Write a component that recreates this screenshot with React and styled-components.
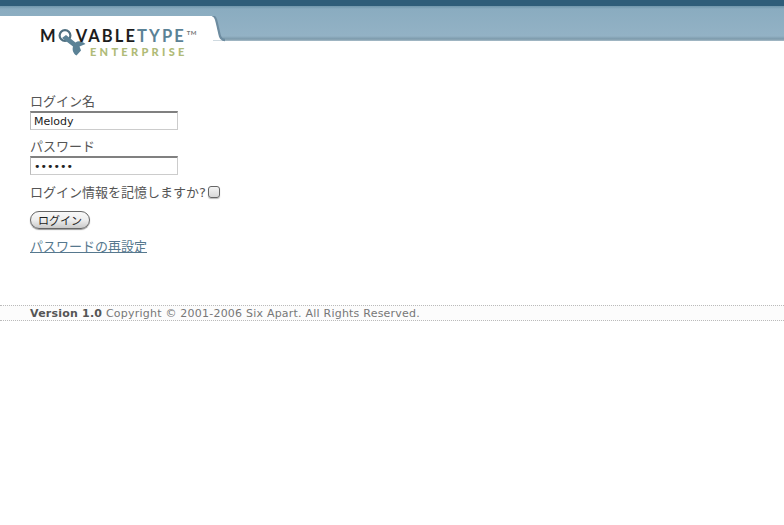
import styled, { createGlobalStyle } from "styled-components";

const GlobalStyle = createGlobalStyle`
  html, body {
    margin: 0;
    padding: 0;
    background: #fff;
  }
  body {
    font-family: "DejaVu Sans", "Noto Sans CJK JP", sans-serif;
    color: #444;
  }
`;

const Masthead = styled.div`
  height: 94px;
  background:
    linear-gradient(#2e5d79 0, #2e5d79 6px, #6f96ab 6px, #8aacc0 9px, #93b2c5 36px, #7d9aab 39px, #a9bdc9 41px) no-repeat;
  background-size: 100% 41px;
  display: flex;
  flex-direction: column;
`;

const LogoTab = styled.div`
  position: relative;
  box-sizing: border-box;
  width: 213px;
  height: 78px;
  margin-top: 16px;
  padding: 12px 0 0 40px;
  background: #fff;
`;

const TabCurve = styled.svg`
  position: absolute;
  left: 210px;
  top: 0;
`;

const LogoTop = styled.div`
  display: flex;
  align-items: flex-start;
  height: 18px;
  font-family: Lato, "Open Sans", sans-serif;
  font-weight: 700;
  font-size: 16.5px;
  line-height: 17px;
  letter-spacing: 2.1px;
  color: #1d1d1d;
  white-space: nowrap;
`;

const LogoBlue = styled.span`
  color: #5b8296;
`;

const LogoTm = styled.span`
  margin-left: 1px;
  font-size: 6px;
  line-height: 9px;
  letter-spacing: 0.3px;
  color: #777;
`;

const Wrench = styled.svg`
  flex: none;
  width: 30px;
  height: 30px;
  margin-top: -1px;
  margin-right: -12px;
`;

const LogoBottom = styled.div`
  margin: 0 0 0 50px;
  font-family: Lato, "Open Sans", sans-serif;
  font-weight: 900;
  font-size: 11px;
  line-height: 12px;
  letter-spacing: 3.3px;
  color: #b0bb78;
`;

const Form = styled.form`
  display: flex;
  flex-direction: column;
  align-items: flex-start;
  padding-left: 30px;
`;

const Label = styled.label`
  padding-bottom: 2px;
  font-size: 13px;
  line-height: 15px;
  color: #555;
`;

const TextInput = styled.input`
  box-sizing: border-box;
  display: block;
  width: 148px;
  height: 19px;
  margin: 0 0 9px;
  padding: 0 3px;
  border: 1px solid #ccc;
  border-top: 2px solid #808080;
  border-left-color: #bbb;
  outline: none;
  font-family: "DejaVu Sans", sans-serif;
  font-size: 11px;
  color: #222;
  background: #fff;
`;

const RememberRow = styled.div`
  display: flex;
  align-items: center;
  gap: 2px;
  height: 18px;
  margin-top: -2px;
  font-size: 13px;
  color: #555;
`;

const CheckBox = styled.span`
  box-sizing: border-box;
  display: block;
  width: 12px;
  height: 12px;
  margin-top: 2px;
  border: 1px solid #666;
  border-radius: 3px;
  background: linear-gradient(#f4f4f4, #d8d8d8);
  box-shadow: 0 1px 1px #bbb;
`;

const LoginButton = styled.button`
  box-sizing: border-box;
  width: 60px;
  height: 18px;
  margin-top: 11px;
  padding: 0;
  border: 1px solid #666;
  border-radius: 9px;
  background: linear-gradient(#f8f8f8, #eee 50%, #c9c9c9);
  box-shadow: 0 1px 1px #999;
  font-family: "Noto Sans CJK JP", sans-serif;
  font-size: 11px;
  line-height: 15px;
  color: #222;
`;

const ResetLink = styled.a`
  margin-top: 9px;
  font-size: 13px;
  line-height: 17px;
  color: #56788e;
  text-decoration: underline;
`;

const Footer = styled.div`
  box-sizing: border-box;
  height: 16px;
  margin-top: 50px;
  padding-left: 30px;
  border-top: 1px dotted #bbb;
  border-bottom: 1px dotted #bbb;
  background: #fcfcfc;
  font-size: 11px;
  line-height: 15px;
  letter-spacing: 0.22px;
  color: #777;
  white-space: nowrap;
`;

const Version = styled.strong`
  color: #555;
`;

export default function App() {
  return (
    <>
      <GlobalStyle />
      <Masthead>
        <LogoTab>
          <TabCurve width="18" height="26" viewBox="0 0 18 26">
            <path d="M1 0 C5 1 5 4 6 8 L8.5 19 C9.5 23 11 24 14 24" fill="none" stroke="#6d8ca0" strokeWidth="2.5" transform="translate(1 0)" />
            <path d="M0 0 H1 C5 1 5 4 6 8 L8.5 19 C9.5 23 11 24.5 14 24.5 H0 Z" fill="#fff" />
          </TabCurve>
          <LogoTop>
            M
            <Wrench viewBox="0 0 30 30">
              <circle cx="7" cy="8.5" r="5.4" fill="none" stroke="#4f6f80" strokeWidth="2.2" />
              <path d="M4 11 L8 8 L17.5 15.5 C20 13.5 24 14 27.5 17 L21.5 19.5 L23 23.5 L18.5 28.5 C15 26.5 14 22.5 15 19.5 Z" fill="#5b8296" />
            </Wrench>
            VABLE<LogoBlue>TYPE</LogoBlue>
            <LogoTm>TM</LogoTm>
          </LogoTop>
          <LogoBottom>ENTERPRISE</LogoBottom>
        </LogoTab>
      </Masthead>
      <Form>
        <Label>ログイン名</Label>
        <TextInput defaultValue="Melody" />
        <Label>パスワード</Label>
        <TextInput type="password" defaultValue="melody" />
        <RememberRow>
          ログイン情報を記憶しますか?
          <CheckBox />
        </RememberRow>
        <LoginButton type="button">ログイン</LoginButton>
        <ResetLink href="#">パスワードの再設定</ResetLink>
      </Form>
      <Footer>
        <Version>Version 1.0</Version> Copyright © 2001-2006 Six Apart. All Rights Reserved.
      </Footer>
    </>
  );
}
